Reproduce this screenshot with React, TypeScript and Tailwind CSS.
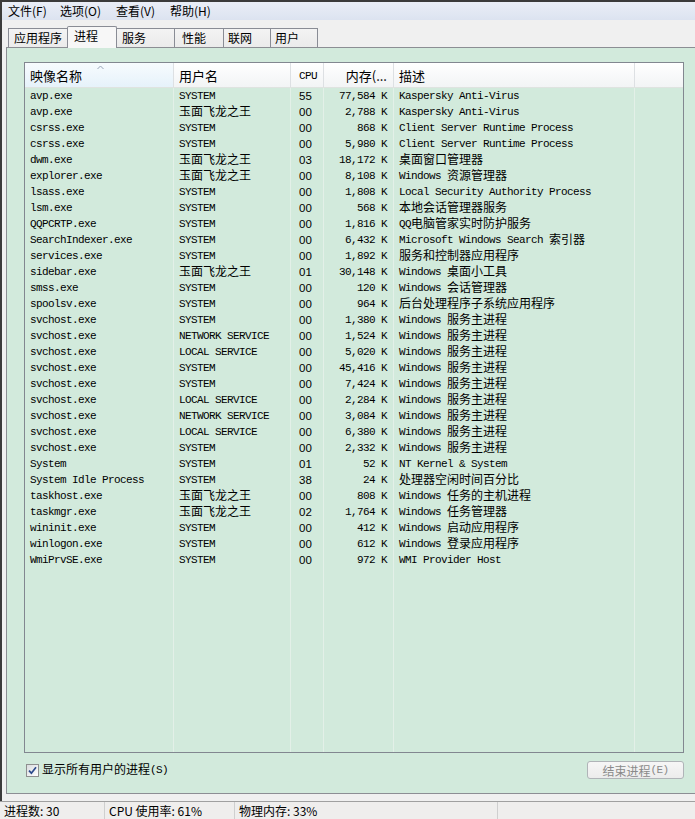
import React from "react";

type Row = [string, string, string, string, string];

const rows: Row[] = [
  ["avp.exe", "SYSTEM", "55", "77,584 K", "Kaspersky Anti-Virus"],
  ["avp.exe", "玉面飞龙之王", "00", "2,788 K", "Kaspersky Anti-Virus"],
  ["csrss.exe", "SYSTEM", "00", "868 K", "Client Server Runtime Process"],
  ["csrss.exe", "SYSTEM", "00", "5,980 K", "Client Server Runtime Process"],
  ["dwm.exe", "玉面飞龙之王", "03", "18,172 K", "桌面窗口管理器"],
  ["explorer.exe", "玉面飞龙之王", "00", "8,108 K", "Windows 资源管理器"],
  ["lsass.exe", "SYSTEM", "00", "1,808 K", "Local Security Authority Process"],
  ["lsm.exe", "SYSTEM", "00", "568 K", "本地会话管理器服务"],
  ["QQPCRTP.exe", "SYSTEM", "00", "1,816 K", "QQ电脑管家实时防护服务"],
  ["SearchIndexer.exe", "SYSTEM", "00", "6,432 K", "Microsoft Windows Search 索引器"],
  ["services.exe", "SYSTEM", "00", "1,892 K", "服务和控制器应用程序"],
  ["sidebar.exe", "玉面飞龙之王", "01", "30,148 K", "Windows 桌面小工具"],
  ["smss.exe", "SYSTEM", "00", "120 K", "Windows 会话管理器"],
  ["spoolsv.exe", "SYSTEM", "00", "964 K", "后台处理程序子系统应用程序"],
  ["svchost.exe", "SYSTEM", "00", "1,380 K", "Windows 服务主进程"],
  ["svchost.exe", "NETWORK SERVICE", "00", "1,524 K", "Windows 服务主进程"],
  ["svchost.exe", "LOCAL SERVICE", "00", "5,020 K", "Windows 服务主进程"],
  ["svchost.exe", "SYSTEM", "00", "45,416 K", "Windows 服务主进程"],
  ["svchost.exe", "SYSTEM", "00", "7,424 K", "Windows 服务主进程"],
  ["svchost.exe", "LOCAL SERVICE", "00", "2,284 K", "Windows 服务主进程"],
  ["svchost.exe", "NETWORK SERVICE", "00", "3,084 K", "Windows 服务主进程"],
  ["svchost.exe", "LOCAL SERVICE", "00", "6,380 K", "Windows 服务主进程"],
  ["svchost.exe", "SYSTEM", "00", "2,332 K", "Windows 服务主进程"],
  ["System", "SYSTEM", "01", "52 K", "NT Kernel & System"],
  ["System Idle Process", "SYSTEM", "38", "24 K", "处理器空闲时间百分比"],
  ["taskhost.exe", "玉面飞龙之王", "00", "808 K", "Windows 任务的主机进程"],
  ["taskmgr.exe", "玉面飞龙之王", "02", "1,764 K", "Windows 任务管理器"],
  ["wininit.exe", "SYSTEM", "00", "412 K", "Windows 启动应用程序"],
  ["winlogon.exe", "SYSTEM", "00", "612 K", "Windows 登录应用程序"],
  ["WmiPrvSE.exe", "SYSTEM", "00", "972 K", "WMI Provider Host"],
];

function Mixed({ t }: { t: string }) {
  const parts = t.split(/([\u3400-\u9fff]+)/).filter((p) => p.length > 0);
  return (
    <>
      {parts.map((p, i) =>
        /[\u3400-\u9fff]/.test(p) ? (
          <span
            key={i}
            className="relative top-[1px] font-['Noto_Sans_CJK_SC',sans-serif] text-[12px] leading-[12px] tracking-normal"
          >
            {p}
          </span>
        ) : (
          <span
            key={i}
            className="font-['Liberation_Mono',monospace] text-[11px] tracking-[-0.6px] whitespace-pre"
          >
            {p}
          </span>
        )
      )}
    </>
  );
}

const tabs = [
  { label: "应用程序", cls: "w-[59px] pl-[5px] border-l" },
  { label: "进程", cls: "w-[50px] pl-[6px]", active: true },
  { label: "服务", cls: "w-[58px] pl-[5px] border-r" },
  { label: "性能", cls: "w-[49px] pl-[7px] border-r" },
  { label: "联网", cls: "w-[47px] pl-[4px] border-r" },
  { label: "用户", cls: "w-[47px] pl-[4px] border-r" },
];

function Checkbox() {
  return (
    <div className="w-[13px] h-[13px] border border-[#8e8f8f] bg-linear-to-br from-[#d9dcdf] to-white flex items-center justify-center">
      <svg width="9" height="9" viewBox="0 0 9 9">
        <path d="M1 4.6 L3.4 7.2 L8 1.2" stroke="#2b4a8c" strokeWidth="1.7" fill="none" />
      </svg>
    </div>
  );
}

const MONOCOL = "font-['Liberation_Mono',monospace] text-[11px]";

export default function App() {
  return (
    <div className="w-[695px] h-[819px] bg-[#f0f0f0] flex flex-col overflow-hidden text-black font-['Noto_Sans_CJK_SC',sans-serif]">
      <div className="flex flex-col border-t-2 border-l-2 border-[#3b3b3b]">
        {/* menu bar */}
        <div className="h-[18px] bg-linear-to-b from-[#eaeef7] to-[#dce3f0] flex items-center pl-[6px] text-[12px] leading-[18px]">
          <div className="w-[52px]">文件(F)</div>
          <div className="w-[56px]">选项(O)</div>
          <div className="w-[54px]">查看(V)</div>
          <div>帮助(H)</div>
        </div>
        {/* tabs */}
        <div className="h-[27px] flex items-end pl-[6px] relative z-10">
          {tabs.map((t, i) =>
            t.active ? (
              <div
                key={i}
                className={`${t.cls} h-[22px] -mb-px border border-b-0 border-[#898c95] rounded-t-[2px] bg-[#f7f7f7] text-[12px] leading-[16px] pt-[1px]`}
              >
                {t.label}
              </div>
            ) : (
              <div
                key={i}
                className={`${t.cls} h-[19px] border-t border-[#898c95] bg-linear-to-b from-[#f3f3f3] to-[#ebebeb] text-[12px] leading-[17px]`}
              >
                {t.label}
              </div>
            )
          )}
        </div>
        {/* panel */}
        <div className="ml-[4px] h-[747px] border-t border-l border-b border-[#8c8e94] bg-[#d2eadc] pt-[14px] pl-[17px]">
          <div className="w-[660px] h-[691px] border border-[#828790] flex flex-col">
            {/* header */}
            <div className="h-[25px] flex border-b border-[#dfe3e0] bg-linear-to-b from-white to-[#f2f4f5] text-[13px] leading-[22px] pt-[2px]">
              <div className="w-[149px] -mt-[2px] pt-[2px] border-r border-[#dde0e3] pl-[5px] relative bg-linear-to-b from-[#f7fbfe] to-[#e6f2fa]">
                <svg className="absolute left-[72px] top-[2px]" width="7" height="5" viewBox="0 0 7 5">
                  <path d="M0.5 4 L3.5 1 L6.5 4" stroke="#97a3b6" strokeWidth="1" fill="none" />
                </svg>
                映像名称
              </div>
              <div className="w-[117px] -mt-[2px] pt-[2px] border-r border-[#dde0e3] pl-[5px]">用户名</div>
              <div className="w-[33px] -mt-[2px] pt-[2px] border-r border-[#dde0e3] pl-[8px] font-['Liberation_Mono',monospace] text-[11px] tracking-[-0.6px]">
                CPU
              </div>
              <div className="w-[70px] -mt-[2px] pt-[2px] border-r border-[#dde0e3] pr-[6px] text-right">内存(...</div>
              <div className="w-[241px] -mt-[2px] pt-[2px] border-r border-[#dde0e3] pl-[5px]">描述</div>
              <div className="flex-1" />
            </div>
            {/* body */}
            <div className="flex-1 flex leading-[16px]">
              <div className={`w-[149px] border-r border-[#e3f0e8] pl-[5px] flex flex-col ${MONOCOL}`}>
                {rows.map((r, i) => (
                  <div key={i} className="h-[16px] whitespace-nowrap">
                    <Mixed t={r[0]} />
                  </div>
                ))}
              </div>
              <div className={`w-[117px] border-r border-[#e3f0e8] pl-[5px] flex flex-col ${MONOCOL}`}>
                {rows.map((r, i) => (
                  <div key={i} className="h-[16px] whitespace-nowrap">
                    <Mixed t={r[1]} />
                  </div>
                ))}
              </div>
              <div className="w-[33px] border-r border-[#e3f0e8] pl-[8px] flex flex-col font-['Liberation_Sans',sans-serif] text-[11.5px]">
                {rows.map((r, i) => (
                  <div key={i} className="h-[16px]">
                    {r[2]}
                  </div>
                ))}
              </div>
              <div className={`w-[70px] border-r border-[#e3f0e8] pr-[6px] flex flex-col text-right ${MONOCOL}`}>
                {rows.map((r, i) => (
                  <div key={i} className="h-[16px] whitespace-nowrap">
                    <Mixed t={r[3]} />
                  </div>
                ))}
              </div>
              <div className={`w-[241px] border-r border-[#e3f0e8] pl-[5px] flex flex-col ${MONOCOL}`}>
                {rows.map((r, i) => (
                  <div key={i} className="h-[16px] whitespace-nowrap">
                    <Mixed t={r[4]} />
                  </div>
                ))}
              </div>
              <div className="flex-1" />
            </div>
          </div>
          {/* bottom row */}
          <div className="w-[660px] h-[18px] mt-[8px] flex items-center justify-between">
            <div className="flex items-center pl-[2px] gap-[3px] leading-[16px]">
              <Checkbox />
              <div className={`whitespace-nowrap ${MONOCOL}`}>
                <Mixed t="显示所有用户的进程(S)" />
              </div>
            </div>
            <div className={`w-[97px] h-[18px] border border-[#b0b4b8] rounded-[3px] bg-linear-to-b from-[#f6f6f6] to-[#ececec] text-[#8a8a8a] flex items-center justify-center leading-[16px] whitespace-nowrap ${MONOCOL}`}>
              <Mixed t="结束进程(E)" />
            </div>
          </div>
        </div>
        <div className="h-[7px]" />
      </div>
      {/* status bar */}
      <div className="h-[18px] border-t border-[#a0a0a0] flex text-[12px] leading-[17px] bg-[#efeeed]">
        <div className="w-[105px] border-r border-[#cfcfcf] pl-[4px]">进程数: 30</div>
        <div className="w-[130px] border-r border-[#cfcfcf] pl-[4px]">CPU 使用率: 61%</div>
        <div className="w-[263px] border-r border-[#cfcfcf] pl-[4px]">物理内存: 33%</div>
        <div className="flex-1" />
      </div>
    </div>
  );
}
